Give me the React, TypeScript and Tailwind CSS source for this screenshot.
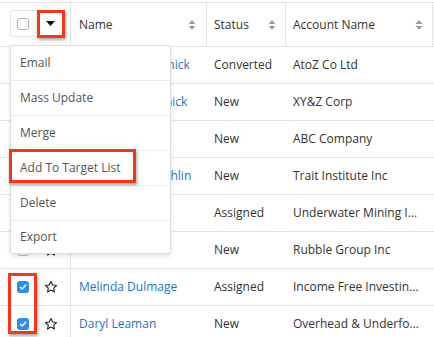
import React from 'react'

type Row = {
    name: string
    status: string
    account: string
    checked?: boolean
}

const rows: Row[] = [
    { name: 'Valentina Bronsnick', status: 'Converted', account: 'AtoZ Co Ltd' },
    { name: 'Christina Bronsnick', status: 'New', account: 'XY&Z Corp' },
    { name: 'Jim Brennan', status: 'New', account: 'ABC Company' },
    { name: 'Anastasiya Coughlin', status: 'New', account: 'Trait Institute Inc' },
    { name: 'Max Jensen', status: 'Assigned', account: 'Underwater Mining I…' },
    { name: 'Barbara Hansen', status: 'New', account: 'Rubble Group Inc' },
    { name: 'Melinda Dulmage', status: 'Assigned', account: 'Income Free Investin…', checked: true },
    { name: 'Daryl Leaman', status: 'New', account: 'Overhead & Underfo…', checked: true },
]

const menuItems = ['Email', 'Mass Update', 'Merge', 'Add To Target List', 'Delete', 'Export']

function SortIcon() {
    return (
        <svg width="8" height="12" viewBox="0 0 8 12" className="shrink-0">
            <path d="M0.5 5 L4 1.2 L7.5 5 Z" fill="#9a9a9a" />
            <path d="M0.5 7 L7.5 7 L4 10.8 Z" fill="#9a9a9a" />
        </svg>
    )
}

function Star() {
    return (
        <svg width="14" height="14" viewBox="0 0 24 24" className="shrink-0">
            <path
                d="M12 2.5l2.9 6.1 6.6.8-4.9 4.6 1.3 6.6L12 17.3l-5.9 3.3 1.3-6.6-4.9-4.6 6.6-.8z"
                fill="none"
                stroke="#222"
                strokeWidth="1.9"
                strokeLinejoin="round"
            />
        </svg>
    )
}

function Checkbox({ checked }: { checked?: boolean }) {
    if (checked) {
        return (
            <div className="w-[12px] h-[12px] rounded-[3px] bg-[#2f8ee6] flex items-center justify-center shrink-0">
                <svg width="8" height="8" viewBox="0 0 8 8">
                    <path d="M1.3 4.2 L3.2 6 L6.8 2" fill="none" stroke="#fff" strokeWidth="1.4" strokeLinecap="round" strokeLinejoin="round" />
                </svg>
            </div>
        )
    }
    return <div className="w-[12px] h-[12px] rounded-[3px] border border-[#b5b5b5] bg-white shrink-0" />
}

function RedBox({ className }: { className: string }) {
    return (
        <div className={`absolute border-[3px] border-[#f0381f] shadow-[1px_2px_3px_rgba(0,0,0,0.35)] pointer-events-none ${className}`} />
    )
}

export default function App() {
    return (
        <div className="relative w-[434px] h-[337px] overflow-hidden bg-white font-['Open_Sans',sans-serif] text-[12px] text-[#333]">
            <div className="mt-[2px] flex h-[45px] border-y border-[#e4e4e4]">
                <div className="w-[71px] border-r border-[#e4e4e4] pl-[10px] pt-[7px] shrink-0">
                    <div className="flex h-[27px] w-[54px] items-center rounded-[3px] border border-[#e2e2e2]">
                        <div className="pl-[6px] pr-[8px]">
                            <Checkbox />
                        </div>
                        <div className="flex flex-1 items-center justify-center h-full">
                            <svg width="9" height="5" viewBox="0 0 9 5">
                                <path d="M0 0 L9 0 L4.5 5 Z" fill="#111" />
                            </svg>
                        </div>
                    </div>
                </div>
                <div className="w-[136px] border-r border-[#e4e4e4] pl-[8px] pr-[10px] flex items-center justify-between shrink-0">
                    <span>Name</span>
                    <SortIcon />
                </div>
                <div className="w-[79px] border-r border-[#e4e4e4] pl-[7px] pr-[9px] flex items-center justify-between shrink-0">
                    <span>Status</span>
                    <SortIcon />
                </div>
                <div className="w-[147px] border-r border-[#e4e4e4] pl-[7px] pr-[9px] flex items-center justify-between shrink-0">
                    <span>Account Name</span>
                    <SortIcon />
                </div>
            </div>

            {rows.map((row) => (
                <div key={row.name} className="flex h-[37px] border-b border-[#e4e4e4]">
                    <div className="w-[71px] border-r border-[#e4e4e4] flex items-center pl-[17px] gap-[15px] shrink-0">
                        <Checkbox checked={row.checked} />
                        <Star />
                    </div>
                    <div className="w-[136px] pl-[8px] flex items-center whitespace-nowrap text-[#1a76c5] shrink-0">
                        {row.name}
                    </div>
                    <div className="w-[79px] pl-[7px] flex items-center whitespace-nowrap shrink-0">{row.status}</div>
                    <div className="flex-1 pl-[7px] flex items-center whitespace-nowrap overflow-hidden">{row.account}</div>
                </div>
            ))}

            <div className="absolute left-[10px] top-[45px] w-[161px] rounded-[3px] border border-[#dcdcdc] bg-white shadow-[0_2px_4px_rgba(0,0,0,0.12)]">
                {menuItems.map((item, i) => (
                    <div
                        key={item}
                        className={`flex items-center pl-[9px] text-[#555] ${i < menuItems.length - 1 ? 'h-[35px] border-b border-[#ececec]' : 'h-[32px]'}`}
                    >
                        {item}
                    </div>
                ))}
            </div>

            <RedBox className="left-[37px] top-[10px] w-[28px] h-[28px]" />
            <RedBox className="left-[9px] top-[149px] w-[127px] h-[34px]" />
            <RedBox className="left-[8px] top-[273px] w-[29px] h-[61px]" />
        </div>
    )
}
